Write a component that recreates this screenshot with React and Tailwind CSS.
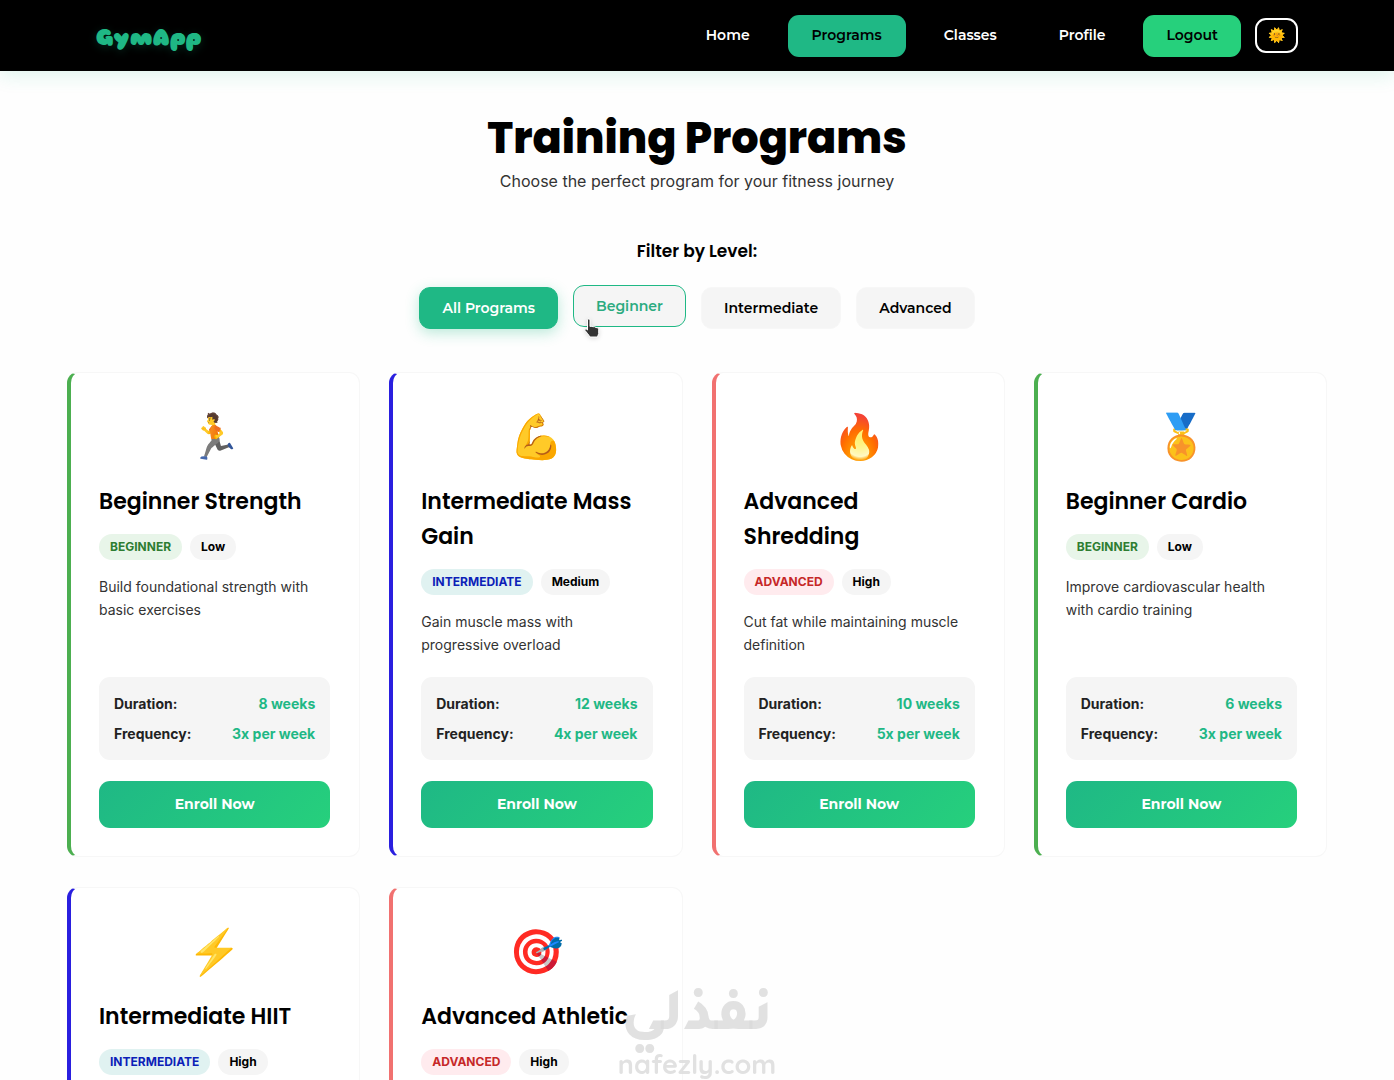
const navLinks = [
  { label: "Home" },
  { label: "Programs", active: true },
  { label: "Classes" },
  { label: "Profile" },
];

const levels = {
  Beginner: { edge: "border-l-[#4caf50]", badge: "bg-[#e8f5e9] text-[#2e7d32]" },
  Intermediate: { edge: "border-l-[#2a1fdf]", badge: "bg-[#e0f2f1] text-[#0d1fb8]" },
  Advanced: { edge: "border-l-[#f17170]", badge: "bg-[#ffebee] text-[#c62828]" },
};

const programs = [
  { icon: "🏃", name: "Beginner Strength", level: "Beginner", intensity: "Low", text: "Build foundational strength with basic exercises", duration: "8 weeks", frequency: "3x per week" },
  { icon: "💪", name: "Intermediate Mass Gain", level: "Intermediate", intensity: "Medium", text: "Gain muscle mass with progressive overload", duration: "12 weeks", frequency: "4x per week" },
  { icon: "🔥", name: "Advanced Shredding", level: "Advanced", intensity: "High", text: "Cut fat while maintaining muscle definition", duration: "10 weeks", frequency: "5x per week" },
  { icon: "🏅", name: "Beginner Cardio", level: "Beginner", intensity: "Low", text: "Improve cardiovascular health with cardio training", duration: "6 weeks", frequency: "3x per week" },
  { icon: "⚡", name: "Intermediate HIIT", level: "Intermediate", intensity: "High" },
  { icon: "🎯", name: "Advanced Athletic", level: "Advanced", intensity: "High" },
];

function Navbar() {
  return (
    <header className="bg-black shadow-[0_4px_18px_rgba(29,185,134,0.15)]">
      <div className="mx-auto flex h-[71px] max-w-[1202px] items-center justify-between">
        <a
          href="#home"
          className="pt-[6px] font-['Sniglet','Fredoka',sans-serif] text-[23px] font-extrabold text-[#1fb885] [text-shadow:0_2px_10px_rgba(31,184,133,0.2)]"
        >
          GymApp
        </a>
        <nav className="flex items-center gap-[14px] font-['Montserrat',sans-serif] text-[14px] font-semibold">
          {navLinks.map((link) => (
            <a
              key={link.label}
              href={"#" + link.label.toLowerCase()}
              className={
                "flex h-[42px] items-center rounded-[11px] px-6 " +
                (link.active ? "bg-[#1fb885] text-black" : "text-white")
              }
            >
              {link.label}
            </a>
          ))}
          <button type="button" className="h-[42px] rounded-[11px] bg-[#26d07c] px-[23px] text-black">
            Logout
          </button>
          <button
            type="button"
            aria-label="Toggle theme"
            className="flex h-[35px] w-[43px] items-center justify-center rounded-[11px] border-2 border-white text-[14px]"
          >
            🌞
          </button>
        </nav>
      </div>
    </header>
  );
}

function HandCursor() {
  return (
    <svg viewBox="0 0 16 21" aria-hidden="true" className="absolute top-[31px] left-[11px] h-[21px] w-4 drop-shadow-sm">
      <path
        d="M3.500 2c0-1.500 2.500-1.500 2.500 0v6.500l1-.3 2 .5 1.500 0 1.500.8 1.300.2c1 .4 1.400 1.200 1.400 2.300v3.500l-1.200 3.500H6L3.500 15.500 1 12.500c-.6-1 .7-2 1.600-1.300l.9.8z"
        fill="#333"
        stroke="#fff"
        strokeWidth="1"
        strokeLinejoin="round"
      />
    </svg>
  );
}

function Filters() {
  const base = "h-[42px] rounded-[11px] border px-[22px] ";
  const plain = "border-[#f7f7f7] bg-[#f5f5f5] text-black";
  return (
    <section className="mt-[43px] text-center">
      <h2 className="font-['Poppins',sans-serif] text-[17px] leading-7 font-semibold text-black">Filter by Level:</h2>
      <div className="mt-[22px] flex flex-wrap justify-center gap-[15px] font-['Montserrat',sans-serif] text-[14px] font-semibold">
        <button
          type="button"
          className={base + "border-[#1fb885] bg-[#1fb885] text-white shadow-[0_4px_14px_rgba(31,184,133,0.3)]"}
        >
          All Programs
        </button>
        <div className="relative">
          <button type="button" className={base + "-translate-y-0.5 border-[#1fb885] bg-[#f5f5f5] text-[#2bab80]"}>
            Beginner
          </button>
          <HandCursor />
        </div>
        <button type="button" className={base + plain}>Intermediate</button>
        <button type="button" className={base + plain}>Advanced</button>
      </div>
    </section>
  );
}

function ProgramCard({ program }) {
  const level = levels[program.level];
  return (
    <article
      className={
        "flex min-h-[485px] flex-col rounded-[11px] border border-l-4 border-[#f7f7f7] bg-white py-7 pr-[29px] pl-7 " + level.edge
      }
    >
      <div className="text-center text-[44px] leading-[70px]">{program.icon}</div>
      <h3 className="mt-[13px] font-['Poppins',sans-serif] text-[22px] leading-[35px] font-semibold text-black">
        {program.name}
      </h3>
      <div className="mt-[15px] flex gap-2 text-[12px] leading-[26px]">
        <span className={"rounded-full px-[11px] font-bold uppercase " + level.badge}>{program.level}</span>
        <span className="rounded-full bg-[#f5f5f5] px-[11px] font-bold text-black">{program.intensity}</span>
      </div>
      {program.text && (
        <>
          <p className="mt-[15px] mb-[21px] grow pr-2 text-[14px] leading-[23px] text-[#333]">{program.text}</p>
          <dl className="grid grid-cols-[auto_auto] justify-between gap-y-[7px] rounded-[11px] bg-[#f5f5f5] px-[15px] py-[15px] text-[14px] leading-[23px] font-bold">
            <dt className="text-[#222]">Duration:</dt>
            <dd className="text-right text-[#1fb885]">{program.duration}</dd>
            <dt className="text-[#222]">Frequency:</dt>
            <dd className="text-right text-[#1fb885]">{program.frequency}</dd>
          </dl>
          <button
            type="button"
            className="mt-[21px] h-[47px] rounded-[11px] bg-linear-135 from-[#1fb885] to-[#26d07c] font-['Montserrat',sans-serif] text-[14px] font-bold text-white"
          >
            Enroll Now
          </button>
        </>
      )}
    </article>
  );
}

function Watermark() {
  return (
    <div className="pointer-events-none fixed inset-x-0 bottom-0 flex flex-col items-center text-[#d9d9d9]/80">
      <span lang="ar" dir="rtl" className="font-['Tajawal','Noto_Sans_Arabic',sans-serif] text-[60px] leading-[56px] font-extrabold">
        نفذلي
      </span>
      <span className="font-['Quicksand',sans-serif] text-[27px] leading-8 font-bold">nafezly.com</span>
    </div>
  );
}

export default function App() {
  return (
    <div className="h-screen overflow-hidden bg-[#fefefe] font-['Inter',sans-serif]">
      <Navbar />
      <main className="mx-auto max-w-[1260px] pt-[41px]">
        <div className="text-center">
          <h1 className="font-['Poppins',sans-serif] text-[43px] leading-[52px] font-extrabold text-black">
            Training Programs
          </h1>
          <p className="mt-1 text-[16px] leading-[26px] text-[#333]">Choose the perfect program for your fitness journey</p>
        </div>
        <Filters />
        <div className="mt-[43px] grid grid-cols-4 gap-x-[29px] gap-y-[30px]">
          {programs.map((program) => (
            <ProgramCard key={program.name} program={program} />
          ))}
        </div>
      </main>
      <Watermark />
    </div>
  );
}
